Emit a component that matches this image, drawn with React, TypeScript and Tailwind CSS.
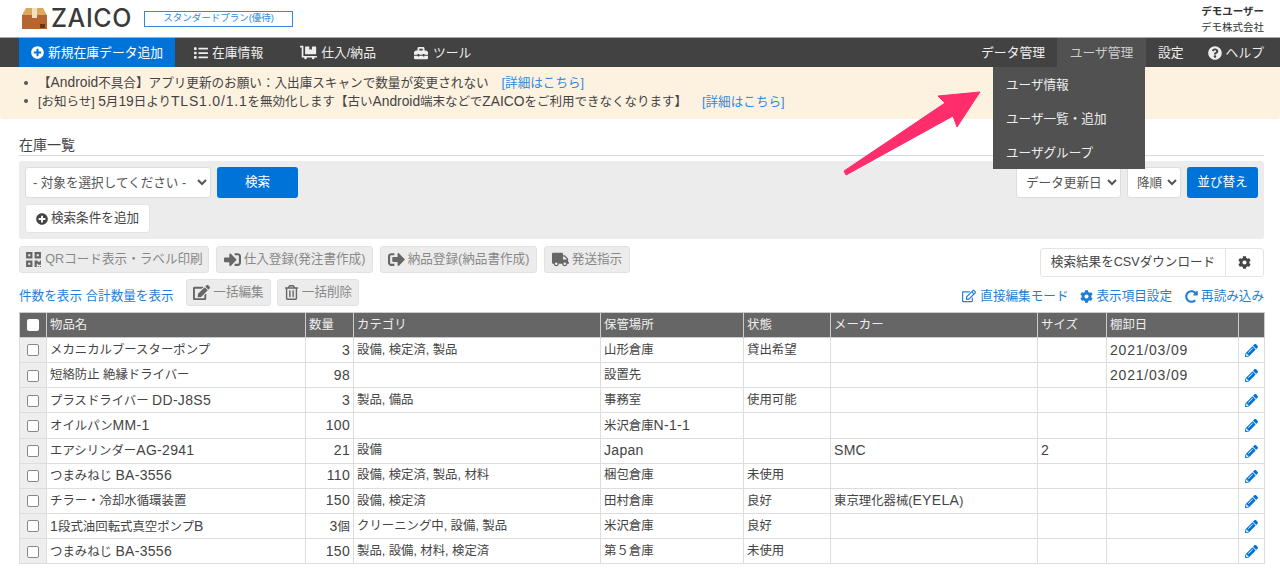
import {
  FaCog,
  FaDollyFlatbed,
  FaEdit,
  FaList,
  FaPencilAlt,
  FaPlusCircle,
  FaQrcode,
  FaQuestionCircle,
  FaRedoAlt,
  FaRegEdit,
  FaRegTrashAlt,
  FaSignInAlt,
  FaSignOutAlt,
  FaToolbox,
  FaTruck,
} from "react-icons/fa";

const rows = [
  ["メカニカルブースターポンプ", "3", "設備, 検定済, 製品", "山形倉庫", "貸出希望", "", "", "2021/03/09"],
  ["短絡防止 絶縁ドライバー", "98", "", "設置先", "", "", "", "2021/03/09"],
  ["プラスドライバー DD-J8S5", "3", "製品, 備品", "事務室", "使用可能", "", "", ""],
  ["オイルパンMM-1", "100", "", "米沢倉庫N-1-1", "", "", "", ""],
  ["エアシリンダーAG-2941", "21", "設備", "Japan", "", "SMC", "2", ""],
  ["つまみねじ BA-3556", "110", "設備, 検定済, 製品, 材料", "梱包倉庫", "未使用", "", "", ""],
  ["チラー・冷却水循環装置", "150", "設備, 検定済", "田村倉庫", "良好", "東京理化器械(EYELA)", "", ""],
  ["1段式油回転式真空ポンプB", "3個", "クリーニング中, 設備, 製品", "米沢倉庫", "良好", "", "", ""],
  ["つまみねじ BA-3556", "150", "製品, 設備, 材料, 検定済", "第５倉庫", "未使用", "", "", ""],
];

const headers = ["物品名", "数量", "カテゴリ", "保管場所", "状態", "メーカー", "サイズ", "棚卸日", ""];
const widths = [27, 259, 48, 247, 143, 87, 207, 69, 132, 26];

// latin runs sit larger than the kana around them in the original font
function Mixed({ text, latin = "text-[14px] tracking-[0.3px]" }: { text: string; latin?: string }) {
  return (
    <>
      {text.split(/([A-Za-z0-9][A-Za-z0-9/\-.]*)/).map((part, i) =>
        i % 2 === 1 ? (
          <span key={i} className={part.includes("/") && part.length === 10 ? "text-[14px] tracking-[0.8px]" : latin}>
            {part}
          </span>
        ) : (
          part
        ),
      )}
    </>
  );
}

function GreyButton({ icon, label, className }: { icon: React.ReactNode; label: string; className: string }) {
  return (
    <div className={`flex h-[27px] items-center justify-center gap-[3px] rounded-[3px] border border-[#e2e2e2] bg-[#ececec] text-[12.6px] text-[#888] ${className}`}>
      <span className="text-[17px] text-[#666]">{icon}</span>
      {label}
    </div>
  );
}

export default function App() {
  return (
    <div className="relative h-[570px] w-[1280px] overflow-hidden bg-white text-[12.6px] text-[#444] font-['Liberation_Sans','Noto_Sans_CJK_JP',sans-serif]">
      {/* header */}
      <header className="flex h-[38px] items-center justify-between border-b border-[#aaa] pl-[22px] pr-[16px]">
        <div className="flex items-center">
          <svg width="25" height="21" viewBox="0 0 25 21" className="mb-[1px]">
            <rect x="0" y="7" width="25" height="14" fill="#b5652f" />
            <polygon points="0,7 4,0 10,0 10,7" fill="#dba860" />
            <polygon points="15,7 15,0 21,0 25,7" fill="#dba860" />
            <rect x="10" y="0" width="5" height="10" fill="#efe0c0" />
            <rect x="18" y="16" width="5" height="4" fill="#5a3a22" />
          </svg>
          <span className="ml-[4px] font-['Inter','Liberation_Sans',sans-serif] text-[25px] leading-none font-medium tracking-[0.6px] text-[#3a3a3a]">ZAICO</span>
          <span className="ml-[12px] flex h-[16px] w-[149px] items-center justify-center border border-[#2d8ae0] text-[9.5px] text-[#2d8ae0]">スタンダードプラン(優待)</span>
        </div>
        <div className="text-right text-[10.5px] leading-[16px] text-[#333]">
          <div className="font-bold">デモユーザー</div>
          <div>デモ株式会社</div>
        </div>
      </header>

      {/* nav */}
      <nav className="flex h-[29px] items-center justify-between bg-[#424242] pl-[19px] text-[12.8px] text-[#eee]">
        <div className="flex h-full items-center">
          <div className="flex h-full w-[156px] items-center justify-center gap-[4px] bg-[#0073d9] text-white">
            <FaPlusCircle className="text-[13px]" />
            新規在庫データ追加
          </div>
          <div className="ml-[19px] flex items-center gap-[4px]"><FaList className="text-[14px]" />在庫情報</div>
          <div className="ml-[37px] flex items-center gap-[4px]"><FaDollyFlatbed className="text-[17px]" />仕入/納品</div>
          <div className="ml-[38px] flex items-center gap-[5px]"><FaToolbox className="text-[14px]" />ツール</div>
        </div>
        <div className="flex h-full items-center">
          <div className="mr-[12px]">データ管理</div>
          <div className="flex h-full w-[89px] items-center justify-center bg-[#515151] text-[#ccc]">ユーザ管理</div>
          <div className="ml-[12px]">設定</div>
          <div className="ml-[24px] mr-[16px] flex items-center gap-[4px]"><FaQuestionCircle className="text-[14px]" />ヘルプ</div>
        </div>
      </nav>

      {/* notices */}
      <ul className="h-[52px] rounded-b-[3px] bg-[#fdf1e0] pl-[38px] pt-[7px] text-[12.6px] leading-[18px]">
        <li className="relative before:absolute before:left-[-14px] before:top-[7px] before:h-[4px] before:w-[4px] before:rounded-full before:bg-[#555]">
          <Mixed latin="text-[13.8px]" text="【Android不具合】アプリ更新のお願い：入出庫スキャンで数量が変更されない" />
          <span className="ml-[13px] text-[#2d8ae0]">[詳細はこちら]</span>
        </li>
        <li className="relative text-[12.5px] before:absolute before:left-[-14px] before:top-[7px] before:h-[4px] before:w-[4px] before:rounded-full before:bg-[#555]">
          <Mixed latin="text-[13.8px]" text="[お知らせ] 5月19日よりTLS1.0/1.1を無効化します【古いAndroid端末などでZAICOをご利用できなくなります】" />
          <span className="ml-[15px] text-[12.6px] text-[#2d8ae0]">[詳細はこちら]</span>
        </li>
      </ul>

      {/* main */}
      <main className="ml-[19px] w-[1245px]">
        <h2 className="mt-[18px] h-[19px] border-b border-[#d8d8d8] text-[14px] leading-[17px]">在庫一覧</h2>

        <section className="mt-[5px] h-[78px] rounded-[3px] bg-[#ececec] px-[6px] pt-[6px]">
          <div className="flex justify-between">
            <div className="flex gap-[6px]">
              <select className="h-[31px] w-[186px] rounded-[3px] border border-[#ddd] bg-white pl-[3px] text-[12.6px] text-[#555]">
                <option>- 対象を選択してください -</option>
              </select>
              <div className="flex h-[31px] w-[81px] items-center justify-center rounded-[3px] bg-[#0073d9] text-white">検索</div>
            </div>
            <div className="flex gap-[6px]">
              <select className="h-[31px] w-[105px] rounded-[3px] border border-[#ddd] bg-white pl-[5px] text-[12.6px] text-[#555]">
                <option>データ更新日</option>
              </select>
              <select className="h-[31px] w-[54px] rounded-[3px] border border-[#ddd] bg-white pl-[5px] text-[12.6px] text-[#555]">
                <option>降順</option>
              </select>
              <div className="flex h-[31px] w-[71px] items-center justify-center rounded-[3px] bg-[#0073d9] text-white">並び替え</div>
            </div>
          </div>
          <div className="mt-[6px] flex h-[29px] w-[125px] items-center justify-center gap-[3px] rounded-[3px] border border-[#e4e4e4] bg-white">
            <FaPlusCircle className="text-[12px] text-[#444]" />
            検索条件を追加
          </div>
        </section>

        <div className="mt-[7px] flex items-start justify-between">
          <div className="flex gap-[7px]">
            <GreyButton icon={<FaQrcode />} label="QRコード表示・ラベル印刷" className="w-[190px]" />
            <GreyButton icon={<FaSignInAlt />} label="仕入登録(発注書作成)" className="w-[157px]" />
            <GreyButton icon={<FaSignOutAlt />} label="納品登録(納品書作成)" className="w-[157px]" />
            <GreyButton icon={<FaTruck />} label="発送指示" className="w-[86px]" />
          </div>
          <div className="mt-[2px] flex h-[29px] w-[224px] rounded-[3px] border border-[#e4e4e4] bg-white">
            <div className="flex w-[185px] items-center justify-center border-r border-[#e4e4e4]">検索結果をCSVダウンロード</div>
            <div className="flex flex-1 items-center justify-center"><FaCog className="text-[13px]" /></div>
          </div>
        </div>

        <div className="mt-[2px] flex h-[27px] items-start justify-between">
          <div className="flex items-start">
            <span className="mt-[8px] w-[167px] text-[#1f7fd6]">件数を表示 合計数量を表示</span>
            <div className="flex gap-[6px]">
              <GreyButton icon={<FaEdit />} label="一括編集" className="w-[85px]" />
              <GreyButton icon={<FaRegTrashAlt className="text-[15px]" />} label="一括削除" className="w-[82px]" />
            </div>
          </div>
          <div className="mt-[8px] flex items-center text-[#1f7fd6]">
            <FaRegEdit className="mr-[4px] text-[14px]" />直接編集モード
            <FaCog className="ml-[12px] mr-[3px] text-[13px]" />表示項目設定
            <FaRedoAlt className="ml-[13px] mr-[3px] text-[13px]" />再読み込み
          </div>
        </div>

        <table className="mt-[6px] w-[1245px] table-fixed border-collapse text-[12.4px]">
          <colgroup>
            {widths.map((w, i) => (
              <col key={i} style={{ width: w }} />
            ))}
          </colgroup>
          <thead>
            <tr className="h-[25px] bg-[#666] text-left text-[#eee]">
              <th className="border border-[#ccc] text-center font-normal">
                <span className="inline-block h-[12px] w-[12px] rounded-[2px] bg-white align-middle" />
              </th>
              {headers.map((h, i) => (
                <th key={i} className="border border-[#ccc] px-[3px] font-normal">{h}</th>
              ))}
            </tr>
          </thead>
          <tbody>
            {rows.map((r, i) => (
              <tr key={i} className="h-[25.15px]">
                <td className="border border-[#ddd] bg-[#eee] text-center">
                  <span className="inline-block h-[12px] w-[12px] rounded-[2px] border border-[#888] bg-white align-middle" />
                </td>
                {r.map((c, j) => (
                  <td key={j} className={`overflow-hidden border border-[#ddd] px-[3px] whitespace-nowrap ${j === 1 ? "text-right" : ""}`}>
                    <Mixed text={c} />
                  </td>
                ))}
                <td className="border border-[#ddd] text-center text-[#0073d9]">
                  <FaPencilAlt className="inline-block text-[13px]" />
                </td>
              </tr>
            ))}
          </tbody>
        </table>
      </main>

      {/* user menu */}
      <div className="absolute left-[993px] top-[67px] flex h-[102px] w-[152px] flex-col justify-between bg-[#515151] px-[13px] pb-[7px] pt-[10px] text-[12.6px] leading-[17px] text-[#eee]">
        <div>ユーザ情報</div>
        <div>ユーザ一覧・追加</div>
        <div>ユーザグループ</div>
      </div>

      {/* annotation arrow */}
      <svg className="absolute left-0 top-0" width="1280" height="570" viewBox="0 0 1280 570">
        <polygon points="844,171 945,103 938,96 980,92 957,127 953,116 846,175" fill="#ff2d6b" stroke="#ff2d6b" strokeWidth="1" strokeLinejoin="round" />
      </svg>
    </div>
  );
}
